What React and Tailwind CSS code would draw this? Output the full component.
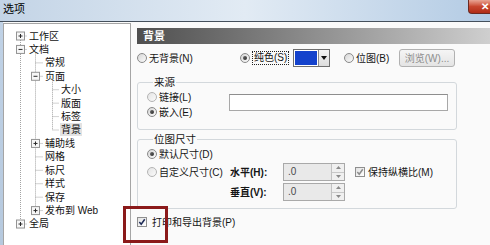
import React from "react";

function Radio({ checked, light }) {
  return (
    <span
      className={
        "inline-flex items-center justify-center w-[10px] h-[10px] rounded-full border shrink-0 " +
        (light
          ? "border-[#b4b4b4] bg-gradient-to-br from-[#e4e4e4] to-[#fafafa]"
          : "border-[#8a8a8a] bg-gradient-to-br from-[#d6d6d6] to-[#fbfbfb]")
      }
    >
      {checked && <span className="w-[4px] h-[4px] rounded-full bg-gradient-to-br from-[#6a6a6a] to-[#2e2e2e]" />}
    </span>
  );
}

function Check({ checked, muted }) {
  return (
    <span className="inline-flex items-center justify-center w-[10px] h-[10px] border border-[#8f8f8f] bg-gradient-to-br from-[#e2e2e2] to-white shrink-0">
      {checked && (
        <svg width="8" height="8" viewBox="0 0 9 9">
          <path
            d="M1.5 4.6 L3.6 7 L7.6 1.4"
            stroke={muted ? "#8c8c8c" : "#1d2b57"}
            strokeWidth="1.7"
            fill="none"
          />
        </svg>
      )}
    </span>
  );
}

function T({ children, className = "" }) {
  return (
    <span className={"inline-block h-[13px] leading-[13px] whitespace-nowrap " + className}>
      {children}
    </span>
  );
}

const items = [
  { t: "工作区", l: 0, e: "+" },
  { t: "文档", l: 0, e: "-" },
  { t: "常规", l: 1 },
  { t: "页面", l: 1, e: "-" },
  { t: "大小", l: 2 },
  { t: "版面", l: 2 },
  { t: "标签", l: 2 },
  { t: "背景", l: 2, sel: true },
  { t: "辅助线", l: 1, e: "+" },
  { t: "网格", l: 1 },
  { t: "标尺", l: 1 },
  { t: "样式", l: 1 },
  { t: "保存", l: 1 },
  { t: "发布到 Web", l: 1, e: "+" },
  { t: "全局", l: 0, e: "+" },
];

const padByLevel = { 0: "pl-[25px]", 1: "pl-[41px]", 2: "pl-[57px]" };
const STEP = 13.43;
const cy = (i) => 12 + STEP * i;
const lineX = { 0: 16.5, 1: 31.5, 2: 48.5 };
const textX = { 0: 23, 1: 39, 2: 55 };

function TreeLines() {
  const dot = { stroke: "#a3a3a3", strokeWidth: 1, strokeDasharray: "1 1" };
  return (
    <svg className="absolute left-0 top-0 pointer-events-none" width="126" height="230">
      <line x1={16.5} x2={16.5} y1={cy(0)} y2={cy(14)} {...dot} />
      <line x1={31.5} x2={31.5} y1={cy(1) + 4} y2={cy(13)} {...dot} />
      <line x1={48.5} x2={48.5} y1={cy(3) + 4} y2={cy(7)} {...dot} />
      {items.map((it, i) => (
        <line key={"h" + i} x1={lineX[it.l]} x2={textX[it.l]} y1={cy(i)} y2={cy(i)} {...dot} />
      ))}
      {items.map((it, i) =>
        it.e ? (
          <g key={"e" + i}>
            <rect
              x={lineX[it.l] - 4}
              y={cy(i) - 4}
              width="8"
              height="8"
              fill="#f7f7f7"
              stroke="#939393"
              strokeWidth="1"
            />
            <line x1={lineX[it.l] - 2} x2={lineX[it.l] + 2} y1={cy(i)} y2={cy(i)} stroke="#2b2b2b" strokeWidth="1" />
            {it.e === "+" && (
              <line x1={lineX[it.l]} x2={lineX[it.l]} y1={cy(i) - 2} y2={cy(i) + 2} stroke="#2b2b2b" strokeWidth="1" />
            )}
          </g>
        ) : null
      )}
    </svg>
  );
}

function Tree() {
  return (
    <div className="relative w-[128px] mt-[1px] bg-white border border-[#a5a5a5] border-b-0 pt-[5.3px]">
      <TreeLines />
      {items.map((it, i) => (
        <div key={i} className={"relative h-[13.43px] flex items-center " + padByLevel[it.l]}>
          <T className={"text-[#111] " + (it.sel ? "bg-[#e3e3e3] px-[1px] -ml-[1px]" : "")}>{it.t}</T>
        </div>
      ))}
    </div>
  );
}

function SpinInput() {
  return (
    <div className="flex w-[62px] h-[18px] border border-[#a9a9a9] bg-[#e9e9e9]">
      <div className="flex-1 pl-[4px] leading-[16px] text-[#4a4a4a]">.0</div>
      <div className="w-[13px] flex flex-col border-l border-[#c2c2c2]">
        <div className="flex-1 flex items-center justify-center bg-[#f0f0f0] border-b border-[#c8c8c8]">
          <svg width="5" height="3" viewBox="0 0 5 3">
            <path d="M0 3 L2.5 0 L5 3 Z" fill="#8a8a8a" />
          </svg>
        </div>
        <div className="flex-1 flex items-center justify-center bg-[#f0f0f0]">
          <svg width="5" height="3" viewBox="0 0 5 3">
            <path d="M0 0 L2.5 3 L5 0 Z" fill="#8a8a8a" />
          </svg>
        </div>
      </div>
    </div>
  );
}

export default function App() {
  return (
    <div className="relative w-[490px] h-[245px] overflow-hidden flex flex-col bg-[#fafafa] text-[10px] text-[#151515] font-['Liberation_Sans','Noto_Sans_CJK_SC',sans-serif]">
      {/* title bar */}
      <div className="h-[21px] shrink-0 flex items-start justify-between bg-gradient-to-r from-[#c3d4e6] via-[#e2ebf4] to-[#b3cbe4]">
        <div className="pl-[3px] pt-[3px] text-[11px] leading-[13px] text-black">选项</div>
        <div className="w-[22px] h-[14px] rounded-bl-[4px] border border-r-0 border-t-0 border-[#6b2a22] bg-gradient-to-b from-[#e8a494] via-[#c8462e] to-[#b02c16] flex items-center justify-end pr-[1px] text-white text-[10px] leading-none font-bold">
          ✕
        </div>
      </div>
      <div className="h-[1px] shrink-0 bg-[#45505c]" />
      <div className="flex flex-1 min-h-0">
        <div className="w-[3px] shrink-0 bg-gradient-to-b from-[#c0d2e6] to-[#b6c9de]" />
        <Tree />
        {/* right panel */}
        <div className="flex-1 pl-[6px] pt-[6px] flex flex-col">
          <div className="h-[16px] pl-[6px] leading-[16px] font-bold text-[11px] text-white bg-gradient-to-r from-[#4f4f4f] via-[#8e8e8e] to-[#cfcfcf]">
            背景
          </div>
          {/* row 1 */}
          <div className="mt-[5px] h-[18px] flex items-center">
            <div className="w-[103px] flex items-center">
              <Radio />
              <T className="ml-[2px]">无背景(N)</T>
            </div>
            <div className="w-[53px] flex items-center">
              <Radio checked />
              <span className="ml-[2px] px-[1px] border border-dotted border-[#222] leading-[12px] whitespace-nowrap">
                纯色(S)
              </span>
            </div>
            <div className="flex h-[18px] border border-[#6e6e6e]">
              <div className="w-[24px] border border-white bg-[#1442cc]" />
              <div className="w-[11px] flex items-center justify-center bg-gradient-to-b from-[#f4f4f4] to-[#dcdcdc] border-l border-[#8a8a8a]">
                <svg width="6" height="4" viewBox="0 0 6 4">
                  <path d="M0 0 L3 4 L6 0 Z" fill="#111" />
                </svg>
              </div>
            </div>
            <div className="ml-[14px] w-[55px] flex items-center">
              <Radio />
              <T className="ml-[2px]">位图(B)</T>
            </div>
            <div className="w-[56px] h-[18px] rounded-[3px] border border-[#b1b1b1] bg-gradient-to-b from-[#f5f5f5] to-[#e4e4e4] flex items-center justify-center text-[#8d8d8d] whitespace-nowrap">
              浏览(W)...
            </div>
          </div>
          {/* 来源 */}
          <fieldset className="mt-[8px] w-[320px] border border-[#d3d8dc] rounded-[3px] pl-[9px] pb-[10px]">
            <legend className="ml-[6px] px-[1px] h-[14px] leading-[14px] text-[10.5px]">来源</legend>
            <div className="flex">
              <div className="w-[82px] pt-[1px] flex flex-col gap-[1px]">
                <div className="h-[14px] flex items-center">
                  <Radio light />
                  <T className="ml-[2px]">链接(L)</T>
                </div>
                <div className="h-[14px] flex items-center">
                  <Radio checked />
                  <T className="ml-[2px]">嵌入(E)</T>
                </div>
              </div>
              <div className="mt-[5px] w-[219px] h-[17px] bg-white border border-[#a8a8a8] border-t-[#8e8e8e]" />
            </div>
          </fieldset>
          {/* 位图尺寸 */}
          <fieldset className="mt-[2px] w-[320px] border border-[#d3d8dc] rounded-[3px] pl-[9px] pb-[7px]">
            <legend className="ml-[6px] px-[1px] h-[14px] leading-[14px] text-[10.5px]">位图尺寸</legend>
            <div className="pt-[1px] h-[15px] flex items-center">
              <Radio checked />
              <T className="ml-[2px]">默认尺寸(D)</T>
            </div>
            <div className="mt-[2px] flex">
              <div className="w-[83px] h-[18px] flex items-center">
                <Radio light />
                <T className="ml-[2px]">自定义尺寸(C)</T>
              </div>
              <div className="flex flex-col gap-[2px]">
                <div className="h-[18px] flex items-center">
                  <T className="w-[53px] font-bold">水平(H):</T>
                  <SpinInput />
                  <div className="ml-[10px] flex items-center">
                    <Check checked muted />
                    <T className="ml-[3px]">保持纵横比(M)</T>
                  </div>
                </div>
                <div className="h-[18px] flex items-center">
                  <T className="w-[53px] font-bold">垂直(V):</T>
                  <SpinInput />
                </div>
              </div>
            </div>
          </fieldset>
          {/* print checkbox */}
          <div className="mt-[6px] h-[14px] flex items-center">
            <Check checked />
            <T className="ml-[5px]">打印和导出背景(P)</T>
          </div>
        </div>
      </div>
      {/* red annotation rectangle */}
      <div className="absolute left-[123px] top-[206px] w-[45px] h-[37px] border-[3px] border-[#8b1a1a]" />
    </div>
  );
}
